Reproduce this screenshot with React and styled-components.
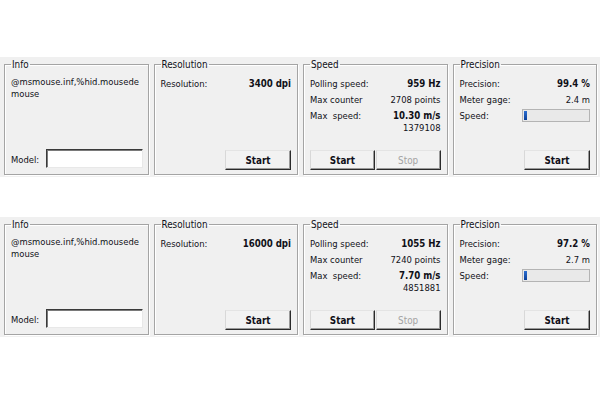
import React from "react";
import styled, { createGlobalStyle } from "styled-components";

const GlobalStyle = createGlobalStyle`
  body {
    margin: 0;
    background: #ffffff;
    font-family: "DejaVu Sans Condensed", "DejaVu Sans", sans-serif;
  }
`;

const Page = styled.div`
  width: 600px;
  height: 393px;
  padding-top: 57px;
  box-sizing: border-box;
  display: flex;
  flex-direction: column;
  gap: 40px;
`;

const Band = styled.div`
  height: 120px;
  background: #f0f0f0;
  padding: 1px 3px 0 4px;
  box-sizing: border-box;
  display: grid;
  grid-template-columns: repeat(4, 1fr);
  gap: 5px;
`;

const Group = styled.fieldset`
  margin: 0;
  height: 117px;
  min-width: 0;
  box-sizing: border-box;
  padding: 4px 6px 4px 6px;
  border: 1px solid #a4a4a4;
  box-shadow: inset 1px 1px 0 #ffffff, 1px 1px 0 #ffffff;
  display: flex;
  flex-direction: column;
  color: #101018;
  font-size: 9.4px;
`;

const Title = styled.legend`
  padding: 0 1px;
  margin-left: 0;
  line-height: 13px;
  font-size: 9.8px;
  color: #101018;
`;

const InfoText = styled.div`
  line-height: 12px;
  padding-top: 1px;
  word-break: break-all;
  padding-right: 2px;
`;

const Row = styled.div`
  display: flex;
  justify-content: space-between;
  align-items: center;
  height: 16px;
  white-space: pre;
`;

const Value = styled.span`
  font-weight: ${(p) => (p.$bold ? "bold" : "normal")};
  font-size: ${(p) => (p.$bold ? "9.6px" : "9.4px")};
`;

const SubValue = styled.div`
  text-align: right;
  line-height: 10px;
`;

const Footer = styled.div`
  margin-top: auto;
  display: flex;
  align-items: center;
  justify-content: ${(p) => p.$align || "flex-end"};
  gap: 1px;
`;

const Button = styled.button`
  width: ${(p) => p.$w || 66}px;
  height: 20px;
  padding: 0;
  background: #f2f2f2;
  border: 1px solid;
  border-color: #e4e4e4 #2a2a2a #2a2a2a #d8d8d8;
  box-shadow: inset -1px -1px 0 #9a9a9a;
  font-family: inherit;
  font-size: 9.8px;
  font-weight: ${(p) => (p.disabled ? "normal" : "bold")};
  color: ${(p) => (p.disabled ? "#a4a4a4" : "#101018")};
`;

const ModelLabel = styled.span`
  margin-right: 6px;
`;

const ModelInput = styled.input`
  width: 97px;
  height: 19px;
  box-sizing: border-box;
  padding: 0;
  background: #ffffff;
  border: 1px solid;
  border-color: #3a3a3a #e8e8e8 #e8e8e8 #3a3a3a;
  box-shadow: inset 1px 1px 0 #7a7a7a;
  margin-bottom: 2px;
`;

const Meter = styled.div`
  width: 68px;
  height: 13px;
  box-sizing: border-box;
  border: 1px solid #b4b4b4;
  background: #e9e9e9;
  padding: 1px;
`;

const MeterFill = styled.div`
  height: 100%;
  background: linear-gradient(#2d6fd0, #0a3f9a);
`;

const data = [
  {
    dpi: "3400 dpi",
    polling: "959 Hz",
    counter: "2708 points",
    speed: "10.30 m/s",
    raw: "1379108",
    precision: "99.4 %",
    gage: "2.4 m",
    fill: 3,
  },
  {
    dpi: "16000 dpi",
    polling: "1055 Hz",
    counter: "7240 points",
    speed: "7.70 m/s",
    raw: "4851881",
    precision: "97.2 %",
    gage: "2.7 m",
    fill: 3,
  },
];

const Panel = ({ d }) => (
  <Band>
    <Group>
      <Title>Info</Title>
      <InfoText>@msmouse.inf,%hid.mousedemouse</InfoText>
      <Footer $align="flex-start">
        <ModelLabel>Model:</ModelLabel>
        <ModelInput type="text" />
      </Footer>
    </Group>
    <Group>
      <Title>Resolution</Title>
      <Row>
        <span>Resolution:</span>
        <Value $bold>{d.dpi}</Value>
      </Row>
      <Footer>
        <Button>Start</Button>
      </Footer>
    </Group>
    <Group>
      <Title>Speed</Title>
      <Row>
        <span>Polling speed:</span>
        <Value $bold>{d.polling}</Value>
      </Row>
      <Row>
        <span>Max counter</span>
        <Value>{d.counter}</Value>
      </Row>
      <Row>
        <span>Max  speed:</span>
        <Value $bold>{d.speed}</Value>
      </Row>
      <SubValue>{d.raw}</SubValue>
      <Footer $align="center">
        <Button>Start</Button>
        <Button disabled>Stop</Button>
      </Footer>
    </Group>
    <Group>
      <Title>Precision</Title>
      <Row>
        <span>Precision:</span>
        <Value $bold>{d.precision}</Value>
      </Row>
      <Row>
        <span>Meter gage:</span>
        <Value>{d.gage}</Value>
      </Row>
      <Row>
        <span>Speed:</span>
        <Meter>
          <MeterFill style={{ width: d.fill }} />
        </Meter>
      </Row>
      <Footer>
        <Button>Start</Button>
      </Footer>
    </Group>
  </Band>
);

export default function App() {
  return (
    <>
      <GlobalStyle />
      <Page>
        {data.map((d, i) => (
          <Panel key={i} d={d} />
        ))}
      </Page>
    </>
  );
}
